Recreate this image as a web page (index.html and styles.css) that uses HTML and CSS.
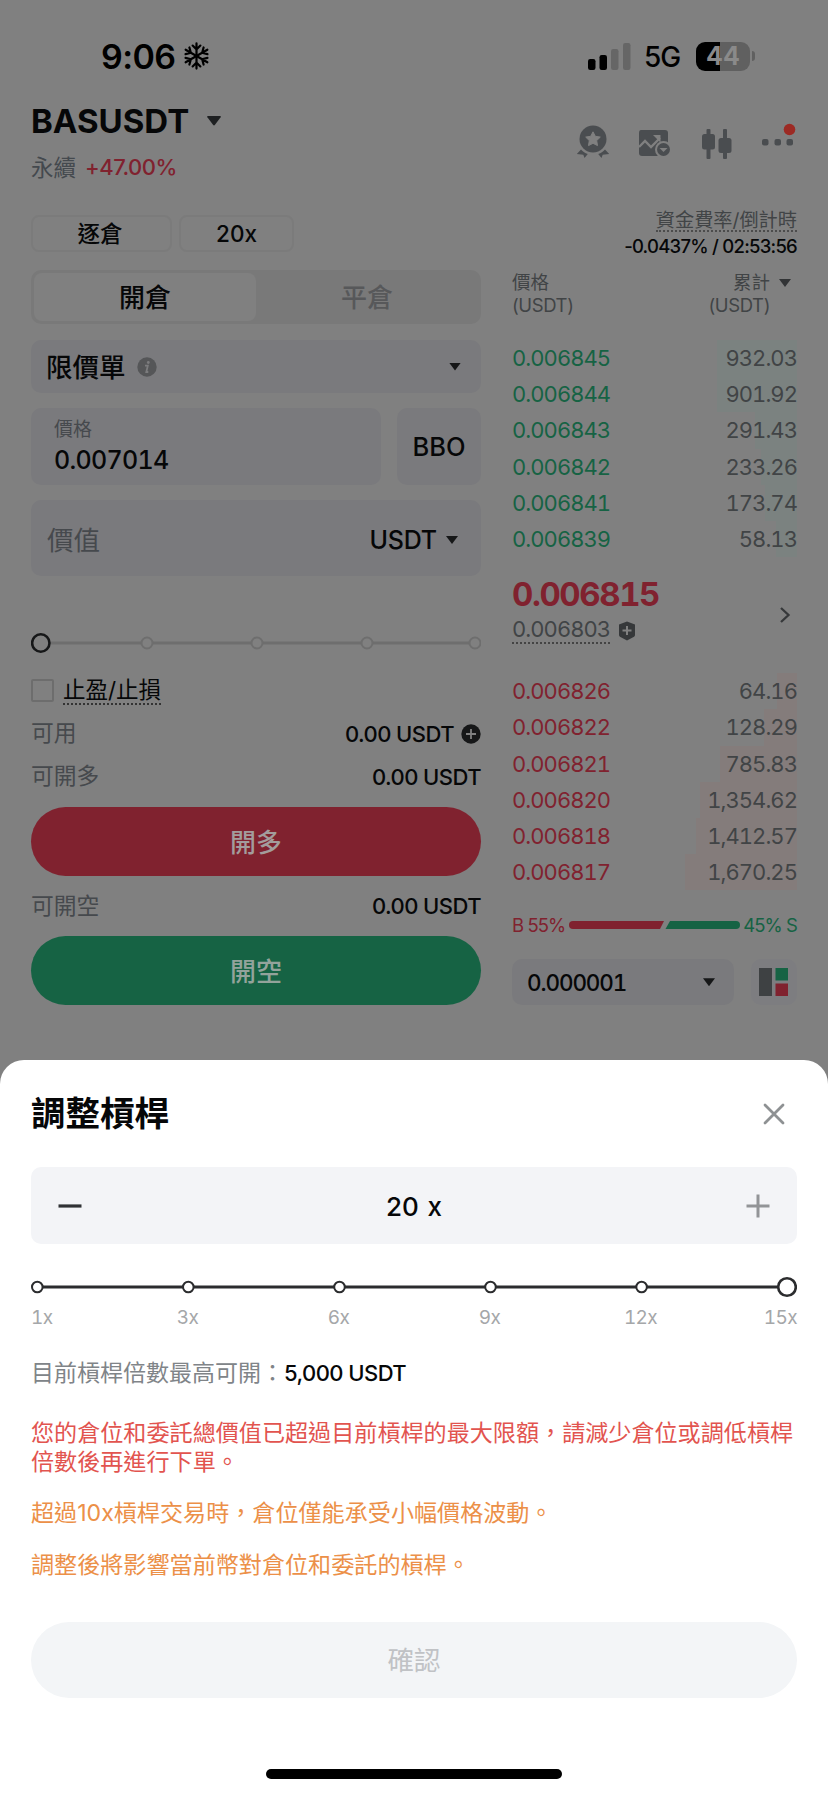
FILE: index.html
```html
<!DOCTYPE html>
<html lang="zh-Hant">
<head>
<meta charset="utf-8">
<title>BASUSDT</title>
<link rel="stylesheet" href="styles.css">
</head>
<body>
<div class="screen">
  <div class="status">
    <div class="clock"><span>9:06</span>
      <svg class="snow" viewBox="0 0 28 30" fill="none" stroke="#000" stroke-width="2.300" stroke-linecap="round"><g id="arm"><path d="M14 15V2M10 4.200l4 4 4-4"/></g><use href="#arm" transform="rotate(60 14 15)"/><use href="#arm" transform="rotate(120 14 15)"/><use href="#arm" transform="rotate(180 14 15)"/><use href="#arm" transform="rotate(240 14 15)"/><use href="#arm" transform="rotate(300 14 15)"/></svg>
    </div>
    <div class="signal">
      <svg width="43" height="27" viewBox="0 0 43 27"><rect y="16" width="7.500" height="11" rx="2.200"/><rect x="11.500" y="12" width="7.500" height="15" rx="2.200"/><rect x="23" y="6" width="7.500" height="21" rx="2.200" fill="#666"/><rect x="35" y="0" width="7.500" height="27" rx="2.200" fill="#666"/></svg>
      <span class="net">5G</span>
      <div class="battery"><span>44</span></div><i class="cap"></i>
    </div>
  </div>

  <header class="head">
    <div>
      <div class="pair"><span>BASUSDT</span><svg width="16" height="12" viewBox="0 0 16 12"><path d="M2 1h12q1.500 0 .6 1.300L9 9.800q-1 1.200-2 0L1.400 2.300Q.5 1 2 1Z" fill="#1e2022"/></svg></div>
      <div class="change"><span class="perp">永續</span><span class="pct">+47.00%</span></div>
    </div>
    <div class="tools">
      <svg width="34" height="36" viewBox="0 0 34 36"><circle cx="17" cy="14" r="13.500" fill="#4a4d50"/><path d="m17 6.800 2.300 4.500 5 .8-3.600 3.500.8 5-4.500-2.300-4.500 2.300.8-5-3.600-3.500 5-.8Z" fill="#808080" stroke="#808080" stroke-linejoin="round"/><path d="M5 24.500c2 2.200 4 3.600 6.800 4.600L8.500 33l-1.200-3.300L.8 29ZM29 24.500c-2 2.200-4 3.600-6.800 4.600l3.300 3.900 1.200-3.300 6.500-.7Z" fill="#4a4d50"/></svg>
      <svg width="34" height="30" viewBox="0 0 34 30"><path d="M3 1h24q3 0 3 3v23H4q-3 0-3-3V4q0-3 2-3Z" fill="#4a4d50"/><path d="m1 18 6-6 6 6L22 9" fill="none" stroke="#808080" stroke-width="2.300"/><path d="M15 6h7.500v7.500Z" fill="#808080"/><circle cx="25.500" cy="20.500" r="8.500" fill="#808080"/><circle cx="25.500" cy="20.500" r="6.500" fill="#4a4d50"/><path d="M21.500 19h8l-4 4Z" fill="#808080"/></svg>
      <svg width="30" height="30" viewBox="0 0 30 30" fill="#4a4d50"><rect x="4.500" y="0" width="4" height="30" rx="1"/><rect x="0" y="5" width="13" height="15.500" rx="2.500"/><rect x="21" y="0" width="4" height="30" rx="1"/><rect x="16.500" y="9" width="13" height="15" rx="2.500"/></svg>
      <svg width="34" height="36" viewBox="0 0 34 36" fill="#4a4d50"><rect x="0" y="18" width="6.500" height="6.500" rx="2"/><rect x="12.500" y="18" width="6.500" height="6.500" rx="2"/><rect x="24.500" y="18" width="6.500" height="6.500" rx="2"/><circle cx="27.500" cy="8.500" r="5.800" fill="#9c2a24"/></svg>
    </div>
  </header>

  <main class="cols">
    <section class="form">
      <div class="modes"><div class="chip chip-a">逐倉</div><div class="chip chip-b">20x</div></div>
      <div class="tabs"><div class="tab on">開倉</div><div class="tab">平倉</div></div>
      <div class="box type"><span>限價單</span><svg class="info" width="20" height="20" viewBox="0 0 20 20"><circle cx="10" cy="10" r="9.700" fill="#555658"/><circle cx="11.300" cy="5.500" r="1.400" fill="#7c7c7e"/><path d="M8 8.600h2.800L9.300 15h2" fill="none" stroke="#7c7c7e" stroke-width="1.800"/></svg><i class="tri"></i></div>
      <div class="pricerow"><div class="box price"><small>價格</small><b>0.007014</b></div><div class="box bbo">BBO</div></div>
      <div class="box value"><span>價值</span><em>USDT</em><i class="tri"></i></div>
      <svg class="range" width="450" height="24" viewBox="0 0 450 24"><path d="M20 12h90M122 12h98M232 12h98M342 12h96" stroke="#6e6e6e" stroke-width="3"/><g fill="none" stroke="#6e6e6e" stroke-width="2"><circle cx="116" cy="12" r="5.500"/><circle cx="226" cy="12" r="5.500"/><circle cx="336" cy="12" r="5.500"/><circle cx="444" cy="12" r="5.500"/></g><circle cx="9.800" cy="12" r="8.700" fill="none" stroke="#161718" stroke-width="2.600"/></svg>
      <div class="tpsl"><i></i><span>止盈/止損</span></div>
      <div class="line avail"><span>可用</span><b>0.00 USDT</b><svg width="20" height="20" viewBox="0 0 20 20"><circle cx="10" cy="10" r="9.700" fill="#161718"/><path d="M10 5v10M5 10h10" stroke="#808080" stroke-width="1.800"/></svg></div>
      <div class="line"><span>可開多</span><b>0.00 USDT</b></div>
      <div class="cta red">開多</div>
      <div class="line short"><span>可開空</span><b>0.00 USDT</b></div>
      <div class="cta green">開空</div>
    </section>

    <section class="book">
      <div class="fund"><span>資金費率/倒計時</span></div>
      <div class="rate">-0.0437% / 02:53:56</div>
      <div class="bhead"><div>價格<br><span>(USDT)</span></div><div class="cum">累計<br><span>(USDT)</span></div><i class="tri dim"></i></div>
      <div class="rows bid">
        <div class="row"><i style="width:80px"></i><span>0.006845</span><b>932.03</b></div>
        <div class="row"><i style="width:80px"></i><span>0.006844</span><b>901.92</b></div>
        <div class="row"><i style="width:42px"></i><span>0.006843</span><b>291.43</b></div>
        <div class="row"><i style="width:36px"></i><span>0.006842</span><b>233.26</b></div>
        <div class="row"><i style="width:32px"></i><span>0.006841</span><b>173.74</b></div>
        <div class="row"><i style="width:21px"></i><span>0.006839</span><b>58.13</b></div>
      </div>
      <div class="last">
        <div><div class="big">0.006815</div><div class="mark"><span>0.006803</span><svg width="18" height="20" viewBox="0 0 18 20"><path d="M9 .5 17 3.500V14q0 1-1 1.800L9 19.500 2 15.800Q1 15 1 14V3.500Z" fill="#36383a"/><path d="M9 5v9M4.500 9.500h9" stroke="#808080" stroke-width="2"/></svg></div></div>
        <svg class="chev" width="12" height="18" viewBox="0 0 12 18"><path d="m2 2 7.500 7L2 16" fill="none" stroke="#36383a" stroke-width="2.300"/></svg>
      </div>
      <div class="rows ask">
        <div class="row"><i style="width:20px"></i><span>0.006826</span><b>64.16</b></div>
        <div class="row"><i style="width:33px"></i><span>0.006822</span><b>128.29</b></div>
        <div class="row"><i style="width:77px"></i><span>0.006821</span><b>785.83</b></div>
        <div class="row"><i style="width:97px"></i><span>0.006820</span><b>1,354.62</b></div>
        <div class="row"><i style="width:101px"></i><span>0.006818</span><b>1,412.57</b></div>
        <div class="row"><i style="width:112px"></i><span>0.006817</span><b>1,670.25</b></div>
      </div>
      <div class="ratio"><span class="b">B 55%</span><svg width="171" height="8" viewBox="0 0 171 8"><path d="M4 0h91l-4 8H4a4 4 0 0 1 0-8Z" fill="#80222f"/><path d="M101 0h66a4 4 0 0 1 0 8H96.500Z" fill="#166344"/></svg><span class="s">45% S</span></div>
      <div class="bottom"><div class="box step"><span>0.000001</span><i class="tri"></i></div><div class="box grid"><svg width="30" height="30" viewBox="0 0 30 30"><path d="M0 1h13v28H0Z" fill="#3e4143"/><path d="M16.500 1H29v12.500H16.500Z" fill="#166344"/><path d="M16.500 16.500H29V29H16.500Z" fill="#80222f"/></svg></div></div>
    </section>
  </main>

  <section class="sheet">
    <div class="title"><h1>調整槓桿</h1><svg width="22" height="22" viewBox="0 0 22 22"><path d="m2 2 18 18M20 2 2 20" stroke="#8e9193" stroke-width="2.800" stroke-linecap="round"/></svg></div>
    <div class="stepper"><svg width="24" height="24" viewBox="0 0 24 24"><path d="M.5 12h23" stroke="#303235" stroke-width="3.200"/></svg><span>20 x</span><svg width="24" height="24" viewBox="0 0 24 24"><path d="M.5 12h23M12 .5v23" stroke="#929497" stroke-width="3"/></svg></div>
    <svg class="lev" width="766" height="22" viewBox="0 0 766 22"><path d="M6 11h750" stroke="#2b2c2e" stroke-width="3"/><g fill="#fff" stroke="#2b2c2e" stroke-width="2"><circle cx="6.300" cy="11" r="5.300"/><circle cx="157.300" cy="11" r="5.300"/><circle cx="308.500" cy="11" r="5.300"/><circle cx="459.500" cy="11" r="5.300"/><circle cx="610.600" cy="11" r="5.300"/><circle cx="756" cy="11" r="8.800" stroke-width="2.600"/></g></svg>
    <div class="ticks"><span>1x</span><span>3x</span><span>6x</span><span>9x</span><span>12x</span><span>15x</span></div>
    <p class="max">目前槓桿倍數最高可開：<b>5,000 USDT</b></p>
    <p class="warn">您的倉位和委託總價值已超過目前槓桿的最大限額，請減少倉位或調低槓桿<br>倍數後再進行下單。</p>
    <p class="note">超過10x槓桿交易時，倉位僅能承受小幅價格波動。</p>
    <p class="note two">調整後將影響當前幣對倉位和委託的槓桿。</p>
    <div class="confirm">確認</div>
    <div class="home"></div>
  </section>
</div>
</body>
</html>
```
FILE: styles.css
```css
* { box-sizing: border-box; }
body { margin: 0; background: #808080; }
svg { display: block; flex: none; }
b, em, i, small { font-weight: inherit; font-style: normal; font-size: inherit; }
p, h1 { margin: 0; }
.screen {
  width: 828px; height: 1795px; overflow: hidden;
  display: flex; flex-direction: column;
  background: #808080; color: #060708;
  font-family: Inter, "Noto Sans CJK TC", sans-serif;
  white-space: nowrap;
}
.status { height: 96px; display: flex; justify-content: space-between; padding: 37px 73px 0 101px; }
.clock { display: flex; align-items: center; gap: 8px; height: 38px; font-size: 34px; font-weight: 600; letter-spacing: -.6px; color: #000; }
.snow { width: 27px; height: 30px; }
.signal { display: flex; align-items: center; height: 38px; color: #000; }
.net { font-size: 28px; font-weight: 500; margin-left: 13px; width: 52px; letter-spacing: -1px; padding-top: 2px; }
.battery { width: 54px; height: 29px; border-radius: 9px; background: linear-gradient(90deg, #000 24px, #606060 24px); color: #8a8a8a; font-size: 25px; font-weight: 700; line-height: 29px; text-align: center; }
.cap { width: 3px; height: 10px; margin-left: 2px; border-radius: 0 3px 3px 0; background: #606060; }

.head { height: 119px; display: flex; justify-content: space-between; padding: 0 32px 0 31px; }
.pair { display: flex; align-items: center; gap: 17px; height: 50px; font-size: 33px; font-weight: 700; }
.change { display: flex; align-items: center; gap: 9px; height: 30px; margin-top: 6px; font-size: 22px; }
.perp { color: #44494e; font-size: 22.500px; padding-bottom: 3px; }
.pct { color: #80222f; font-weight: 500; letter-spacing: -.5px; }
.tools { display: flex; align-items: center; gap: 28px; height: 62px; padding-top: 33px; }
.tools svg:nth-child(4) { margin-left: 2px; margin-top: -10px; }
.tools svg:nth-child(2) { margin-right: 2px; }
.tools svg:nth-child(1) { margin-top: -2px; }

.cols { height: 845px; display: flex; justify-content: space-between; padding: 0 31px; }
.form { width: 450px; display: flex; flex-direction: column; }
.box { background: #7a7a7d; border-radius: 10px; display: flex; align-items: center; }
.modes { display: flex; gap: 7px; height: 37px; }
.chip { border: 2px solid #7b7b7b; border-radius: 8px; display: flex; align-items: center; justify-content: center; font-size: 22.500px; font-weight: 500; }
.chip-a { width: 141px; padding: 0 3px 4px 0; }
.chip-b { width: 115px; }
.tabs { display: flex; height: 54px; margin-top: 18px; padding: 3px; border-radius: 10px; background: #797979; }
.tab { flex: 1; display: flex; align-items: center; justify-content: center; padding-bottom: 4px; font-size: 26px; font-weight: 500; color: #57585a; border-radius: 8px; }
.tab.on { background: #808080; color: #060708; }
.type { height: 53px; margin-top: 16px; padding: 0 20px 0 15px; font-size: 26.500px; font-weight: 500; }
.type span { padding-bottom: 3px; }
.info { margin-left: 11px; }
.tri { width: 12px; height: 8px; margin-left: auto; background: #161718; clip-path: polygon(0 0, 100% 0, 50% 100%); }
.pricerow { display: flex; justify-content: space-between; height: 77px; margin-top: 15px; }
.price { width: 350px; flex-direction: column; align-items: flex-start; padding: 8px 23px; }
.price small { font-size: 19px; line-height: 28px; color: #46494d; }
.price b { font-size: 25px; line-height: 32px; font-weight: 500; font-variant-numeric: tabular-nums; letter-spacing: -.7px; }
.bbo { width: 84px; justify-content: center; font-size: 25.500px; font-weight: 500; }
.value { height: 76px; margin-top: 15px; padding: 4px 23px 0 16px; font-size: 26.500px; color: #46494d; }
.value span { padding-bottom: 4px; }
.value em { margin-left: auto; color: #060708; font-size: 25px; font-weight: 500; letter-spacing: -.2px; }
.value .tri { margin-left: 9px; }
.range { margin-top: 55px; }
.tpsl { display: flex; align-items: center; gap: 9px; height: 28px; margin-top: 21px; font-size: 22.500px; }
.tpsl i { width: 23px; height: 23px; border: 2px solid #6d6d6d; border-radius: 2px; }
.tpsl span { line-height: 27px; border-bottom: 2px dotted #333; }
.line { display: flex; justify-content: space-between; align-items: center; height: 43px; font-size: 22.800px; color: #46494d; }
.line span { padding-bottom: 4px; }
.line b { color: #060708; font-size: 22px; font-weight: 500; letter-spacing: -.55px; }
.avail { margin-top: 8px; }
.avail b { margin-left: auto; margin-right: 7px; }
.cta { height: 69px; border-radius: 35px; display: flex; align-items: center; justify-content: center; padding-bottom: 3px; font-size: 26px; font-weight: 500; color: #a39c9c; margin-top: 9px; }
.red { background: #80222f; }
.green { background: #166344; color: #93a39b; margin-top: 0; }
.short { height: 60px; }

.book { width: 285px; display: flex; flex-direction: column; color: #414446; }
.fund { display: flex; justify-content: flex-end; align-items: flex-start; height: 20px; font-size: 19.200px; }
.fund span { border-bottom: 2px dotted #4c4c4c; height: 17px; line-height: 11px; }
.rate { height: 24px; text-align: right; font-size: 18.500px; line-height: 23px; font-weight: 500; color: #060708; letter-spacing: -.75px; }
.bhead { display: flex; margin-top: 12px; height: 69px; font-size: 18.500px; line-height: 23px; }
.bhead span { letter-spacing: -.4px; }
.bhead .cum { margin-left: auto; text-align: right; }
.dim { background: #323436; margin: 8px 6px 0 9px; }
.row { position: relative; display: flex; justify-content: space-between; align-items: center; height: 36.200px; font-size: 22px; font-variant-numeric: tabular-nums; letter-spacing: -.95px; }
.row i { position: absolute; right: 0; top: 0; height: 100%; }
.row span, .row b { position: relative; }
.bid i { background: #7b8280; }
.ask i { background: #847c7b; }
.bid span { color: #166344; }
.ask span { color: #80222f; }
.last { height: 116px; display: flex; justify-content: space-between; padding: 15px 6px 0 0; }
.big { font-size: 33px; line-height: 44px; font-weight: 700; color: #80222f; font-variant-numeric: tabular-nums; letter-spacing: -1.4px; }
.mark { display: flex; align-items: center; gap: 8px; height: 29px; font-size: 22px; font-variant-numeric: tabular-nums; letter-spacing: -.95px; }
.mark span { line-height: 25px; border-bottom: 2px dotted #444; }
.chev { margin-top: 34px; }
.ratio { display: flex; align-items: center; justify-content: space-between; height: 34px; margin-top: 18px; font-size: 18.500px; letter-spacing: -.95px; }
.b { color: #80222f; }
.s { color: #166344; }
.bottom { display: flex; justify-content: space-between; margin-top: 17px; height: 46px; }
.step { width: 222px; padding: 0 19px 0 15px; font-size: 22.500px; font-weight: 500; color: #060708; font-variant-numeric: tabular-nums; letter-spacing: -1.1px; }
.grid { width: 46px; justify-content: center; background: #7d7d80; }

.sheet { flex: 1; background: #fff; border-radius: 24px 24px 0 0; padding: 0 31px; display: flex; flex-direction: column; }
.title { display: flex; justify-content: space-between; align-items: center; height: 107px; padding: 1px 12px 0 0; }
.title h1 { font-size: 34.500px; line-height: 44px; font-weight: 700; }
.stepper { display: flex; align-items: center; justify-content: space-between; height: 77px; padding: 0 27px; border-radius: 10px; background: #f3f4f7; font-size: 26px; font-weight: 500; }
.stepper span { padding-top: 2px; word-spacing: 2px; }
.lev { margin-top: 32px; }
.ticks { display: grid; grid-template-columns: 81px 151px 151px 151px 151px 81px; height: 24px; margin-top: 8px; font-size: 19px; line-height: 24px; letter-spacing: -.6px; color: #a5a7a9; text-align: center; font-variant-numeric: tabular-nums; }
.ticks span:first-child { text-align: left; }
.ticks span:last-child { text-align: right; }
.max { margin-top: 27px; font-size: 23px; line-height: 32px; color: #808488; }
.max b { color: #060708; font-size: 22px; font-weight: 500; letter-spacing: -.55px; }
.warn { margin-top: 30px; font-size: 23.100px; line-height: 28.500px; color: #e2544f; }
.note { margin-top: 22px; font-size: 23.100px; line-height: 30px; color: #ec9048; }
.confirm { height: 76px; margin-top: 42px; border-radius: 38px; background: #f3f5f7; color: #c0c2c5; display: flex; align-items: center; justify-content: center; padding-bottom: 4px; font-size: 26.500px; }
.home { width: 296px; height: 10px; margin: 71px auto 0; border-radius: 5px; background: #000; }
```
